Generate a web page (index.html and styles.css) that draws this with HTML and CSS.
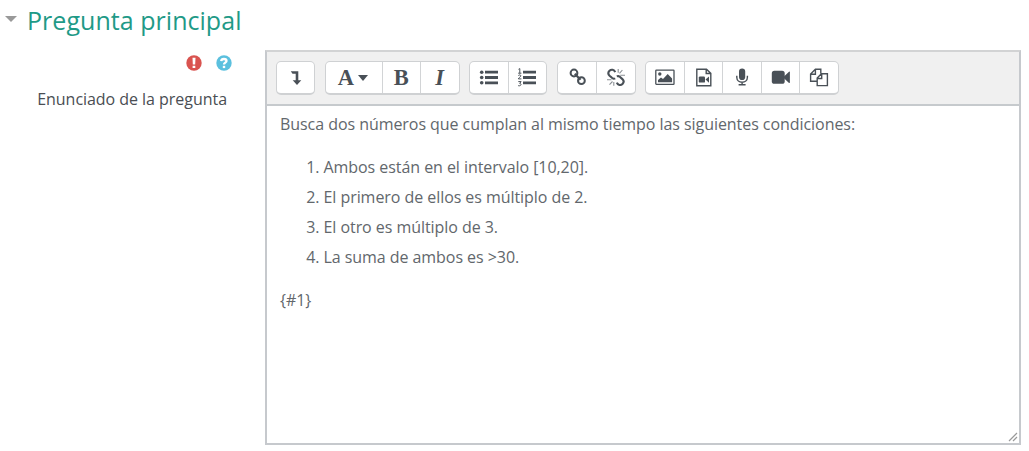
FILE: index.html
```html
<!DOCTYPE html>
<html lang="es">
<head>
<meta charset="utf-8">
<title>Pregunta principal</title>
<link rel="stylesheet" href="styles.css">
</head>
<body>
<h3 class="section-title"><span class="caret"></span><span>Pregunta principal</span></h3>
<div class="form-row">
  <div class="label-col">
    <div class="badges">
      <svg width="16" height="16" viewBox="0 0 16 16"><circle cx="8" cy="8" r="7.7" fill="#d9534f"/><path d="M6.5 2.8h3L9.2 9.4H6.8zM6.6 10.7h2.7v2.3H6.6z" fill="#fff"/></svg>
      <svg width="16" height="16" viewBox="0 0 16 16"><circle cx="8" cy="8" r="7.7" fill="#5bc0de"/><path d="M5.2 6.1C5.4 4.5 6.4 4 7.9 4c1.6 0 2.6.8 2.6 2 0 1.7-2.5 1.7-2.5 3.6" fill="none" stroke="#fff" stroke-width="2.3"/><path d="M6.8 10.8h2.4v2.3H6.8z" fill="#fff"/></svg>
    </div>
    <label class="label">Enunciado de la pregunta</label>
  </div>
  <div class="editor">
    <div class="toolbar">
      <div class="group">
        <button class="btn"><svg width="20" height="20" viewBox="0 0 20 20"><path d="M4.8 3.3h7.5v9h3L11 17l-4.3-4.7h3V5.7H6.5z" fill="#495057"/></svg></button>
      </div>
      <div class="group">
        <button class="btn wide"><span class="glyph">A</span><span class="drop"></span></button>
        <button class="btn"><span class="glyph">B</span></button>
        <button class="btn"><span class="glyph italic">I</span></button>
      </div>
      <div class="group lists">
        <button class="btn"><svg width="20" height="20" viewBox="0 0 20 20" fill="#495057"><circle cx="2.7" cy="4.2" r="1.8"/><circle cx="2.7" cy="9.5" r="1.8"/><circle cx="2.7" cy="14.8" r="1.8"/><path d="M6 2.8h13v2.8H6zM6 8.1h13v2.8H6zM6 13.4h13v2.8H6z"/></svg></button>
        <button class="btn"><svg width="20" height="20" viewBox="0 0 20 20" fill="#495057"><path d="M6 2.8h13v2.8H6zM6 8.1h13v2.8H6zM6 13.4h13v2.8H6z"/><path d="M1.5 1.3l1.3-.7v4.6M1.2 5.2h3.2M1.3 7.6c.6-1 2.6-.9 2.6.3 0 1-2.5 1.7-2.5 3h3M1.3 13.6h2.8l-1.4 1.8c2.1.1 1.7 3-1.5 2.3" fill="none" stroke="#495057" stroke-width="1"/></svg></button>
      </div>
      <div class="group links">
        <button class="btn"><svg width="20" height="20" viewBox="0 0 20 20" fill="none" stroke="#495057" stroke-width="2"><circle cx="6" cy="5" r="3.4"/><circle cx="13.4" cy="12.7" r="3.4"/><path d="M6.8 5.8l5.7 6" stroke-width="2.2"/></svg></button>
        <button class="btn"><svg width="20" height="20" viewBox="0 0 20 20" fill="none" stroke="#495057" stroke-width="2.1"><path d="M9.2 4.1C8.2 1.6 5.3 1 3.5 2.8 1.9 4.4 2.1 6.2 3.6 7.7l2.6 2.3c1 .8 2 .9 3 .4M10.8 14.7c1 2.5 3.9 3.1 5.7 1.3 1.6-1.6 1.4-3.4-.1-4.9l-2.6-2.3c-1-.8-2-.9-3-.4"/><path d="M12.2 1v3.8M16.4 2l-2.9 3.3M14.2 7.2H19M7.8 14v3.8M6.5 13.5L3.5 16.7M1 11.7h4.5" stroke="#8b9095" stroke-width="1.1"/></svg></button>
      </div>
      <div class="group media">
        <button class="btn"><svg width="20" height="20" viewBox="0 0 20 20" fill="#495057"><rect x=".8" y="2.1" width="18.2" height="14.2" rx=".6" fill="none" stroke="#495057" stroke-width="1.3"/><circle cx="4.8" cy="6" r="1.7"/><path d="M3 14.2v-2.2l3-2.6 2 1.7 4.7-5 4.4 4.4v3.7z"/></svg></button>
        <button class="btn"><svg width="20" height="20" viewBox="0 0 20 20" fill="#495057"><path d="M2.8 1.2h9.7l4.3 4.2v12.3h-14zM12.2 1.2v4.3h4.6" fill="none" stroke="#495057" stroke-width="1.4"/><rect x="4.8" y="8.4" width="6.2" height="6.2" rx="1.2"/><path d="M11.5 11.5l3.5-3v6.2z"/></svg></button>
        <button class="btn"><svg width="20" height="20" viewBox="0 0 20 20"><rect x="7" y=".4" width="6.2" height="11.6" rx="3.1" fill="#495057"/><path d="M4.8 7.8v1.4c0 6.7 10.6 6.7 10.6 0V7.8M10.1 14v2.7M6.6 16.7h7" fill="none" stroke="#495057" stroke-width="1.4"/></svg></button>
        <button class="btn"><svg width="20" height="20" viewBox="0 0 20 20" fill="#495057"><rect x=".8" y="2.8" width="12.9" height="13" rx="2.6"/><path d="M13 8.5l5-4.8q.9-.4.9.6v10q0 1-.9.6L13 10.3z"/></svg></button>
        <button class="btn"><svg width="20" height="20" viewBox="0 0 20 20" fill="none" stroke="#495057" stroke-width="1.4"><path d="M8 13.2H1.6V6l4.8-4.8h5.4v4.2M6.4 1.4v4.8H1.8M8.2 10l4.2-4.2h6v11.8H8.2zM12.7 6v4.5H8.4"/></svg></button>
      </div>
    </div>
    <div class="content">
      <p>Busca dos números que cumplan al mismo tiempo las siguientes condiciones:</p>
      <ol>
        <li>Ambos están en el intervalo [10,20].</li>
        <li>El primero de ellos es múltiplo de 2.</li>
        <li>El otro es múltiplo de 3.</li>
        <li>La suma de ambos es &gt;30.</li>
      </ol>
      <p>{#1}</p>
      <svg class="grip" width="10" height="10" viewBox="0 0 10 10"><path d="M1 9L9 1M5 9l4-4" stroke="#999" stroke-width="1.2"/></svg>
    </div>
  </div>
</div>
</body>
</html>
```
FILE: styles.css
```css
* { box-sizing: border-box; }
body { margin: 0; background: #fff; color: #495057; font: 16px/30px "Open Sans", sans-serif; overflow: hidden; }
.section-title { display: flex; align-items: center; gap: 10px; height: 40px; margin: 0; padding-left: 5px; color: #1f9a87; font-size: 25px; font-weight: 400; line-height: 40px; letter-spacing: .04px; }
.caret { border: 6px solid transparent; border-top-color: #999; border-bottom: 0; margin-top: -2px; }
.form-row { display: flex; padding: 10px 8px 0 0; }
.label-col { display: flex; flex-direction: column; align-items: flex-end; width: 265px; padding: 5px 38px 0 0; }
.badges { display: flex; gap: 14px; margin-right: -4.5px; }
.badges svg { display: block; }
.label { margin-top: 13px; font-size: 16px; letter-spacing: -.04px; color: #4a4e53; }
.editor { flex: 1; height: 395px; border: 2px solid #c6c9cd; border-top-color: #d2d3d4; display: flex; flex-direction: column; }
.toolbar { display: flex; gap: 10px; height: 54px; padding: 9px 9px 0; background: #f0f0f0; border-bottom: 2px solid #c6cacd; }
.group { display: flex; height: 34px; background: #fff; border: 1px solid #cfd1d3; border-bottom-width: 2px; border-radius: 5px; }
.btn { display: flex; align-items: center; justify-content: center; width: 38.5px; padding: 0; border: 0; border-left: 1px solid #d2d4d6; background: none; color: #495057; }
.btn:first-child { border-left: 0; width: 37px; }
.btn.wide:first-child { width: 55.5px; }
.lists .btn:first-child, .links .btn:first-child, .media .btn:first-child { width: 38px; padding-left: 1px; }
.lists { margin-left: -1px; }
.media { margin-left: -.7px; }
.glyph { font: bold 22.5px/28px "Liberation Serif", serif; }
.wide .glyph { margin-left: -2px; }
.italic { font-style: italic; }
.drop { margin-left: 4px; border: 5.5px solid transparent; border-top: 6px solid #495057; border-bottom: 0; }
.content { position: relative; flex: 1; padding: 3px 13px; color: #62676c; letter-spacing: -.055px; }
.content p { margin: 0 0 13px; }
.content ol { margin: 0 0 13px; padding-left: 43.5px; }
.grip { position: absolute; right: 1px; bottom: 1px; }
```
